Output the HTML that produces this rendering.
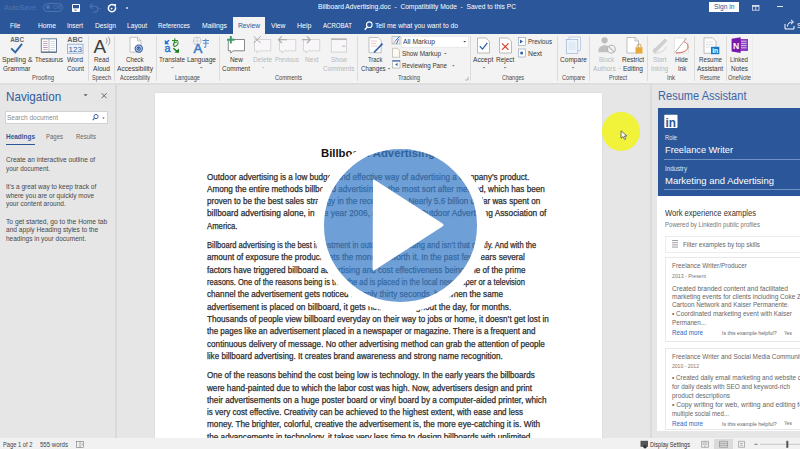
<!DOCTYPE html>
<html><head><meta charset="utf-8">
<style>
*{margin:0;padding:0;box-sizing:border-box}
html,body{width:800px;height:449px;overflow:hidden;background:#e6e6e6;font-family:"Liberation Sans",sans-serif}
body{position:relative}
.a{position:absolute}
.t{position:absolute;white-space:pre;line-height:1;transform-origin:0 50%}
svg{position:absolute;overflow:visible}
</style></head><body>
<!-- title + tabs -->
<div class="a" style="left:0;top:0;width:800px;height:34px;background:#2b579a"></div>
<div class="a" style="left:233px;top:17px;width:32px;height:17px;background:#f3f3f3"></div>
<!-- ribbon -->
<div class="a" style="left:0;top:34px;width:800px;height:49px;background:#f3f3f3"></div>
<div class="a" style="left:0;top:82.5px;width:800px;height:2px;background:#dedede"></div>
<!-- separators -->
<div class="a" style="left:87.5px;top:36px;width:1px;height:45px;background:#dcdcdc"></div>
<div class="a" style="left:114px;top:36px;width:1px;height:45px;background:#dcdcdc"></div>
<div class="a" style="left:156px;top:36px;width:1px;height:45px;background:#dcdcdc"></div>
<div class="a" style="left:219px;top:36px;width:1px;height:45px;background:#dcdcdc"></div>
<div class="a" style="left:357px;top:36px;width:1px;height:45px;background:#dcdcdc"></div>
<div class="a" style="left:470px;top:36px;width:1px;height:45px;background:#dcdcdc"></div>
<div class="a" style="left:557px;top:36px;width:1px;height:45px;background:#dcdcdc"></div>
<div class="a" style="left:589px;top:36px;width:1px;height:45px;background:#dcdcdc"></div>
<div class="a" style="left:647px;top:36px;width:1px;height:45px;background:#dcdcdc"></div>
<div class="a" style="left:694px;top:36px;width:1px;height:45px;background:#dcdcdc"></div>
<div class="a" style="left:726px;top:36px;width:1px;height:45px;background:#dcdcdc"></div>
<div class="a" style="left:752px;top:36px;width:1px;height:45px;background:#ebebeb"></div>
<!-- nav pane -->
<div class="a" style="left:0;top:84.5px;width:117px;height:353.5px;background:#e6e6e6;border-right:2px solid #dadada"></div>
<div class="a" style="left:5px;top:111px;width:102.5px;height:13px;background:#fff;border:1px solid #d2d2d2"></div>
<div class="a" style="left:5.5px;top:143.5px;width:29.5px;height:1.6px;background:#2b579a"></div>
<!-- doc page -->
<div class="a" style="left:154.5px;top:92.5px;width:447.8px;height:346px;background:#fff;box-shadow:0 0 1.5px #cfcfcf"></div>
<!-- resume pane -->
<div class="a" style="left:649.5px;top:84.5px;width:150.5px;height:353.5px;background:#e6e6e6;border-left:2px solid #dadada"></div>
<div class="a" style="left:657.5px;top:108px;width:142.5px;height:87.5px;background:#2b579a"></div>
<div class="a" style="left:664px;top:159px;width:136px;height:1px;background:#6f93c7"></div>
<div class="a" style="left:664px;top:188.8px;width:136px;height:1px;background:#6f93c7"></div>
<div class="a" style="left:656.5px;top:195.5px;width:143.5px;height:235px;background:#fff"></div>
<div class="a" style="left:664.5px;top:235.5px;width:136px;height:17.5px;background:#fff;border:1px solid #ececec;border-right:none"></div>
<div class="a" style="left:664.5px;top:256.5px;width:136px;height:85px;background:#fff;border:1px solid #e8e8e8;border-right:none"></div>
<div class="a" style="left:664.5px;top:347.5px;width:136px;height:82px;background:#fff;border:1px solid #e8e8e8;border-right:none"></div>
<!-- status bar -->
<div class="a" style="left:0;top:438px;width:800px;height:11px;background:#f1f1f1"></div>
<div class="a" style="left:714px;top:438.5px;width:19px;height:10.5px;background:#dadada"></div>
<div class="a" style="left:43px;top:2.5px;width:20px;height:9.5px;border:1px solid #4f74b2;border-radius:5px"></div>
<div class="a" style="left:45.5px;top:5.2px;width:4px;height:4px;background:#4f74b2;border-radius:2px"></div>
<span class="t" style="left:53px;top:3.6px;font-size:6px;color:#4f74b2">Off</span>
<svg style="left:72px;top:3.8px" width="9" height="8" viewBox="0 0 9 8"><path d="M0.5 0.5h7v7h-7z" fill="none" stroke="#fff" stroke-width="1"/><rect x="0.5" y="4.3" width="7" height="3.2" fill="#fff"/><rect x="2.4" y="5.4" width="2.2" height="1.4" fill="#6f8fc3"/></svg>
<svg style="left:88px;top:3px" width="14" height="10" viewBox="0 0 14 10"><path d="M2 3.2h5a2.9 2.9 0 0 1 0 5.8H5" fill="none" stroke="#4f74b2" stroke-width="1.1"/><path d="M4.5 0.7L2 3.2l2.5 2.5" fill="none" stroke="#4f74b2" stroke-width="1.1"/><path d="M11 5l1.2 1.2 1.2-1.2z" fill="#4f74b2"/></svg>
<svg style="left:106.5px;top:3.5px" width="10" height="10" viewBox="0 0 10 10"><path d="M6.8 1.1A3.6 3.6 0 1 0 8.4 3.2" fill="none" stroke="#fff" stroke-width="1.5"/><path d="M5.6 0.1L9.2 0.3L8.6 3.6z" fill="#fff"/><circle cx="4.6" cy="4.6" r="0.9" fill="#fff"/></svg>
<div class="a" style="left:125.8px;top:6.5px;width:2px;height:2px;background:#aebfe0"></div>
<svg style="left:752px;top:4.5px" width="8" height="6" viewBox="0 0 8 6"><rect x="0.4" y="0.4" width="6.6" height="4.8" fill="none" stroke="#dfe6f2" stroke-width="0.8"/><rect x="0.4" y="0.4" width="6.6" height="1.4" fill="#dfe6f2"/><path d="M3.7 2v3" stroke="#dfe6f2" stroke-width="0.8"/></svg>
<div class="a" style="left:777px;top:6px;width:6px;height:1px;background:#dfe6f2"></div>
<div class="a" style="left:709px;top:2px;width:30px;height:10px;background:#fff"></div>
<svg style="left:364px;top:20.5px" width="9" height="10" viewBox="0 0 9 10"><circle cx="5.3" cy="3.7" r="2.8" fill="none" stroke="#fff" stroke-width="1.1"/><path d="M3.4 5.8L0.8 8.8" stroke="#fff" stroke-width="1.3"/></svg>
<svg style="left:784px;top:19px" width="12" height="11" viewBox="0 0 12 11"><path d="M1 5v5h9V7" fill="none" stroke="#fff" stroke-width="1"/><path d="M3.5 7.5c0-3 2-4.5 5-4.5M7 0.8l2.5 2.2L7 5.2" fill="none" stroke="#fff" stroke-width="1"/></svg>

<svg style="left:0;top:0" width="800" height="449" viewBox="0 0 800 449">
<!-- Spelling: ABC + check -->
<text x="10.3" y="42.4" font-family="Liberation Sans" font-size="6.6" font-weight="700" fill="#666" textLength="13.7" lengthAdjust="spacingAndGlyphs">ABC</text>
<path d="M11.2 48.3L15.3 52.4L22 43.8" fill="none" stroke="#2f63ae" stroke-width="1.9"/>
<!-- Thesaurus book -->
<rect x="41.3" y="38.8" width="15.2" height="13.4" fill="#fff" stroke="#6b7f99" stroke-width="1"/>
<path d="M49 39v13" stroke="#9aa7b8" stroke-width="0.8"/>
<path d="M43 41.5h4.5M43 43.5h4.5M43 45.5h4.5M43 47.5h4.5M43 49.5h4.5" stroke="#e08a8a" stroke-width="0.7"/>
<path d="M43 43.5h4.5" stroke="#8aa8e0" stroke-width="0.7"/><path d="M43 47.5h4.5" stroke="#a18ad0" stroke-width="0.7"/>
<path d="M50.5 41.5h4.5M50.5 43.5h4.5M50.5 45.5h4.5M50.5 47.5h4.5M50.5 49.5h4.5" stroke="#c9ced6" stroke-width="0.7"/>
<path d="M41.3 52.2h15.2" stroke="#5b6f88" stroke-width="1.2"/>
<!-- Word count -->
<text x="67.3" y="42.4" font-family="Liberation Sans" font-size="6.6" font-weight="700" fill="#666" textLength="15.5" lengthAdjust="spacingAndGlyphs">ABC</text>
<rect x="67.5" y="44.2" width="15.5" height="9" fill="#eef3fb" stroke="#8ca6cc" stroke-width="0.8"/>
<text x="68.6" y="51.6" font-family="Liberation Sans" font-size="6.8" fill="#2f63ae" textLength="13.3" lengthAdjust="spacingAndGlyphs">123</text>
<!-- Read aloud -->
<text x="93.6" y="52.6" font-family="Liberation Sans" font-size="18" fill="#3c3c3c" textLength="12.6" lengthAdjust="spacingAndGlyphs">A</text>
<path d="M106.2 38.3q2 2.6 0 5.4M108.2 36.8q3.3 4.2 0 8.6" fill="none" stroke="#777" stroke-width="0.7"/>
<!-- Check accessibility -->
<path d="M130 37.3h7.5l3.5 3.5v11.3h-11z" fill="#fdfdfd" stroke="#b5b5b5" stroke-width="0.8"/>
<path d="M137.5 37.3v3.5h3.5" fill="none" stroke="#b5b5b5" stroke-width="0.8"/>
<circle cx="138.8" cy="48.6" r="4.2" fill="#3b5e9e"/>
<circle cx="138.8" cy="48.6" r="2.7" fill="none" stroke="#d6e4f6" stroke-width="0.9"/>
<path d="M137.3 48.3l1.4 1.4 2.4-2.6" fill="none" stroke="#9fc3ee" stroke-width="0.9"/>
<!-- Translate -->
<path d="M169 40.3l-2.6 2.3" stroke="#1e73d2" stroke-width="1.5"/><path d="M164.8 39.8v4.4h4.4z" fill="#1e73d2"/>
<text x="164.5" y="52.4" font-family="Liberation Sans" font-size="11.5" fill="#1e73d2" textLength="6" lengthAdjust="spacingAndGlyphs" stroke="#1e73d2" stroke-width="0.4">a</text>
<path d="M172 40.5h6M175 38.3l-1.5 7.5M178.7 42.3c-3.5-1-6 1.6-5.2 3.3 0.8 1.5 3.8 0.5 4.8-2.5" fill="none" stroke="#2a8a2a" stroke-width="1.1"/>
<path d="M173.3 48.3l3.5 3" stroke="#1a7a1a" stroke-width="1.5"/><path d="M179 52.8h-4.6l4.6-4.3z" fill="#1a7a1a"/>
<!-- Language -->
<circle cx="197.2" cy="41" r="3.9" fill="none" stroke="#b0b0b0" stroke-width="0.6"/>
<path d="M193.3 41h7.8M197.2 37.1v7.8" stroke="#b8b8b8" stroke-width="0.5"/>
<text x="193.5" y="53.2" font-family="Liberation Sans" font-size="12" fill="#3b7bc9" stroke="#3b7bc9" stroke-width="0.5" textLength="8.8" lengthAdjust="spacingAndGlyphs">A</text>
<path d="M202.5 40.5h6.5M203.2 43.2h5.5M205.8 38.8v8.3M204 47.3h1.8" fill="none" stroke="#4f8cd6" stroke-width="1"/>
<!-- New comment -->
<path d="M228.3 39.5h16.2v11.3h-11.5l-2.3 2.3v-2.3h-2.4z" fill="#fff" stroke="#7a7a7a" stroke-width="0.9"/>
<path d="M230.8 36v7.4M227.1 39.7h7.4" stroke="#3a9a6a" stroke-width="1.9"/>
<!-- Delete disabled -->
<path d="M254.5 39.5h16.2v11.3h-11.5l-2.3 2.3v-2.3h-2.4z" fill="#f8f6f8" stroke="#d0cdd0" stroke-width="0.8"/>
<path d="M253.8 36.3l6.8 6.8M260.6 36.3l-6.8 6.8" stroke="#a8a8a8" stroke-width="1"/>
<!-- Previous disabled -->
<path d="M279.5 39.5h16.2v11.3h-11.5l-2.3 2.3v-2.3h-2.4z" fill="#f8f6f8" stroke="#d0cdd0" stroke-width="0.8"/>
<path d="M278.5 39.7h8.5M281.8 36.4l-3.3 3.3 3.3 3.3" fill="none" stroke="#a8a8a8" stroke-width="1.1"/>
<!-- Next disabled -->
<path d="M303.5 39.5h16.2v11.3h-11.5l-2.3 2.3v-2.3h-2.4z" fill="#f8f6f8" stroke="#d0cdd0" stroke-width="0.8"/>
<path d="M301.8 39.7h8.5M307 36.4l3.3 3.3-3.3 3.3" fill="none" stroke="#a8a8a8" stroke-width="1.1"/>
<!-- Show comments disabled -->
<rect x="331.3" y="38.6" width="15.3" height="13.5" fill="#f8f6f8" stroke="#cfcccf" stroke-width="0.8"/>
<path d="M331.3 39.3h15.3" stroke="#b9b5b9" stroke-width="1.5"/>
<path d="M342 46.2h3.5" stroke="#c5c0c5" stroke-width="1.2"/>
<!-- Track changes -->
<path d="M369 37.5h9l3.2 3.2v12h-12.2z" fill="#fff" stroke="#a8a8a8" stroke-width="0.7"/>
<path d="M371 41h6M371 43.5h5M371 46h6" stroke="#e8b6b6" stroke-width="0.7"/>
<path d="M374 52.5l8.5-8.8" stroke="#2f5fae" stroke-width="1.7"/>
<!-- All markup / show markup / reviewing pane icons -->
<rect x="392" y="36.5" width="8" height="7.5" fill="#f0f0f5" stroke="#9aa" stroke-width="0.6"/>
<path d="M395.5 40.5l4-4M396.5 44l2-5" stroke="#4b7bc0" stroke-width="1"/><path d="M393 43.5l3-3" stroke="#d78080" stroke-width="0.9"/>
<path d="M392.5 48.3h5l2 2v7h-7z" fill="#fdf8f0" stroke="#a8a8a8" stroke-width="0.6"/>
<rect x="392.5" y="60.5" width="7.5" height="7.5" fill="#fff" stroke="#9a9a9a" stroke-width="0.6"/>
<path d="M392.5 61h7.5" stroke="#2f5fae" stroke-width="1.2"/><path d="M397.5 62.8v3.5l-2.3-1.75z" fill="#2f5fae"/>
<rect x="401.5" y="36.2" width="67" height="11" fill="#fff" stroke="#e0e0e0" stroke-width="0.6"/>
<path d="M463.3 41l1.4 1.4 1.4-1.4z" fill="#444"/>
<path d="M444.2 53l1.2 1.2 1.2-1.2z" fill="#555"/>
<path d="M452.2 65.2l1.2 1.2 1.2-1.2z" fill="#555"/>
<path d="M387.8 68.2l1.2 1.2 1.2-1.2z" fill="#555"/>
<path d="M465 80h3M468 77v3" stroke="#888" stroke-width="0.6"/>
<!-- Accept -->
<path d="M477.5 38h8.5l3.5 3.5v11.5h-12z" fill="#fff" stroke="#a0a0a0" stroke-width="0.7"/>
<path d="M479.8 46.3l2.7 2.8 4.8-6.3" fill="none" stroke="#2f63ae" stroke-width="1.3"/>
<!-- Reject -->
<path d="M499.5 38h8.5l3.5 3.5v11.5h-12z" fill="#fff" stroke="#a0a0a0" stroke-width="0.7"/>
<path d="M502 43.3l6.5 6.5M508.5 43.3l-6.5 6.5" stroke="#d83b2b" stroke-width="1.2"/>
<!-- prev/next small -->
<rect x="518.3" y="37.5" width="7" height="8" fill="#fff" stroke="#8a9ab0" stroke-width="0.6"/>
<path d="M520 39.5l3 2-3 2z" fill="#2f5fae"/>
<rect x="518.3" y="49" width="7" height="8" fill="#fff" stroke="#8a9ab0" stroke-width="0.6"/>
<circle cx="521.6" cy="53" r="1.5" fill="#2f5fae"/>
<!-- Compare -->
<rect x="569" y="37" width="11.5" height="13.5" fill="#f4f8fc" stroke="#a9bfd8" stroke-width="0.7"/>
<rect x="566.3" y="39.5" width="11.5" height="13.8" fill="#eef4fb" stroke="#9ab3d3" stroke-width="0.7"/>
<path d="M568.5 43h7M568.5 45h7M568.5 47h7M568.5 49h7" stroke="#c2d3e8" stroke-width="0.6"/>
<!-- Block authors disabled -->
<circle cx="604.6" cy="40.3" r="3.1" fill="#bdbdbd"/>
<path d="M598.3 52.3c0-5 2.5-7 6.3-7s6.3 2 6.3 7z" fill="#c0c0c0"/>
<circle cx="611.4" cy="49.2" r="3.9" fill="#f3f3f3" stroke="#b5b5b5" stroke-width="1.1"/>
<path d="M608.8 46.6l5.2 5.2" stroke="#b5b5b5" stroke-width="1.1"/>
<!-- Restrict editing -->
<path d="M627 37.5h8l3.5 3.5v12h-11.5z" fill="#fff" stroke="#a8a8a8" stroke-width="0.7"/>
<path d="M635 37.5v3.5h3.5" fill="none" stroke="#a8a8a8" stroke-width="0.7"/>
<path d="M637 47.5v-1.5a2 2 0 0 1 4 0v1.5" fill="none" stroke="#d9a441" stroke-width="0.9"/>
<rect x="635.5" y="47.3" width="7" height="6.2" fill="#e8a93a"/>
<!-- Start inking disabled -->
<path d="M653 50.5l12-11.5l1.8 1.8l-11.5 11.8z" fill="#d0d0d0" stroke="#bdbdbd" stroke-width="0.5"/>
<path d="M655 48c-3 3-2 6 2.5 5s8-3 8.5-6" fill="none" stroke="#c8c8c8" stroke-width="0.8"/>
<!-- Hide ink -->
<path d="M674.3 38h9l5 5v10h-14z" fill="#fff" stroke="#c8c8c8" stroke-width="0.5"/>
<path d="M675 52.5l11.5-14.5" stroke="#888" stroke-width="0.7"/>
<path d="M676 53c6 0 12-2 12-6s-3-5-4-5" fill="none" stroke="#d44a3a" stroke-width="0.9"/>
<!-- Resume assistant -->
<path d="M704 37.8h8.5l3.5 3.5v12h-12z" fill="#fcfcfc" stroke="#a8a8a8" stroke-width="0.7"/>
<path d="M706 42h7M706 44.5h7M706 47h4" stroke="#d0d0d0" stroke-width="0.6"/>
<rect x="711" y="46.8" width="8.3" height="7.4" fill="#1a77c2"/>
<text x="712.2" y="53.2" font-family="Liberation Sans" font-size="6.3" font-weight="700" fill="#fff" textLength="6" lengthAdjust="spacingAndGlyphs">in</text>
<!-- OneNote -->
<path d="M739 39h9v12h-9z" fill="#8a3fc0"/>
<path d="M741 41.2h5.5M741 43.4h5.5M741 45.6h5.5M741 47.8h5.5" stroke="#e3cdf3" stroke-width="0.9"/>
<path d="M731.6 38.8l9-1.5v15.8l-9-1.5z" fill="#7719aa"/>
<text x="733" y="49" font-family="Liberation Sans" font-size="9.5" font-weight="700" fill="#fff" textLength="6.2" lengthAdjust="spacingAndGlyphs">N</text>
<!-- ribbon small dropdown dashes -->
<path d="M171.3 67.6h2.2M200.3 67.6h2.2M483 67.6h2.2M504 67.6h2.2M572 67.6h2.2" stroke="#666" stroke-width="0.8"/>
<path d="M262 67.6h2.2" stroke="#bbb" stroke-width="0.8"/>
<path d="M618.5 68.3h2" stroke="#bbb" stroke-width="0.8"/>
<!-- nav pane icons -->
<path d="M83.6 94.2h4l-2 2.1z" fill="#555"/>
<path d="M101.6 93.2l5 5M106.6 93.2l-5 5" stroke="#555" stroke-width="0.9"/>
<circle cx="96" cy="116.6" r="2.1" fill="none" stroke="#3d66a8" stroke-width="1"/>
<path d="M94.6 118.2l-1.9 2" stroke="#3d66a8" stroke-width="1.2"/>
<path d="M102.2 117.6h2.4l-1.2 1.3z" fill="#555"/>
<!-- linkedin logo in pane -->
<rect x="664.3" y="114.8" width="13.2" height="13.2" rx="0.8" fill="#fff"/>
<text x="665.6" y="126.6" font-family="Liberation Sans" font-size="12" font-weight="700" fill="#2b579a" textLength="10.4" lengthAdjust="spacingAndGlyphs">in</text>
<!-- filter icon -->
<path d="M672 240.5h6M672 242.7h6M672 244.9h6M672 247.1h6" stroke="#888" stroke-width="0.8"/>
<!-- status bar icons -->
<g transform="translate(0,0.8)">
<rect x="76.5" y="440.5" width="7" height="6" fill="none" stroke="#777" stroke-width="0.6"/>
<path d="M80 440.5v6M81.5 442.5l1 1-1 1" stroke="#777" stroke-width="0.6" fill="none"/>
<rect x="640.5" y="440" width="7.5" height="6" fill="#555"/>
<circle cx="645" cy="446" r="1.8" fill="#333"/>
<path d="M701.5 440.5h7v6h-7zM705 440.5v6M702.5 442h1.5M702.5 443.5h1.5M706 442h1.5M706 443.5h1.5" fill="none" stroke="#888" stroke-width="0.6"/>
<path d="M719.5 440.5h8v6h-8zM719.5 442.5h8M719.5 444.5h8" fill="none" stroke="#888" stroke-width="0.6"/>
<path d="M738.5 440.5h6v6h-6zM740 442.5h3M740 444.5h3" fill="none" stroke="#888" stroke-width="0.6"/>
<path d="M754.5 443.5h3" stroke="#666" stroke-width="0.9"/>
<path d="M760 443.5h40" stroke="#aaa" stroke-width="0.6"/>
<rect x="786.3" y="440" width="2" height="7" fill="#555"/>
</g>
</svg>

<span class="t" id="t0" style="left:4.00px;top:3.76px;font-size:7.4px;color:#4f74b2;transform:scaleX(0.9981);">AutoSave</span>
<span class="t" id="t1" style="left:318.00px;top:3.34px;font-size:7.6px;color:#ffffff;transform:scaleX(0.8752);">Billboard Advertising.doc&nbsp; -&nbsp; Compatibility Mode&nbsp; -&nbsp; Saved to this PC</span>
<span class="t" id="t2" style="left:713.50px;top:3.46px;font-size:7.4px;color:#2b579a;transform:scaleX(0.9067);">Sign in</span>
<span class="t" id="t3" style="left:9.80px;top:21.62px;font-size:7.8px;color:#ffffff;transform:scaleX(0.8189);">File</span>
<span class="t" id="t4" style="left:37.90px;top:21.62px;font-size:7.8px;color:#ffffff;transform:scaleX(0.8649);">Home</span>
<span class="t" id="t5" style="left:67.00px;top:21.62px;font-size:7.8px;color:#ffffff;transform:scaleX(0.8205);">Insert</span>
<span class="t" id="t6" style="left:95.00px;top:21.62px;font-size:7.8px;color:#ffffff;transform:scaleX(0.8649);">Design</span>
<span class="t" id="t7" style="left:127.00px;top:21.62px;font-size:7.8px;color:#ffffff;transform:scaleX(0.8539);">Layout</span>
<span class="t" id="t8" style="left:158.00px;top:21.62px;font-size:7.8px;color:#ffffff;transform:scaleX(0.8025);">References</span>
<span class="t" id="t9" style="left:202.00px;top:21.62px;font-size:7.8px;color:#ffffff;transform:scaleX(0.8738);">Mailings</span>
<span class="t" id="t10" style="left:271.00px;top:21.62px;font-size:7.8px;color:#ffffff;transform:scaleX(0.8649);">View</span>
<span class="t" id="t11" style="left:296.70px;top:21.62px;font-size:7.8px;color:#ffffff;transform:scaleX(0.9036);">Help</span>
<span class="t" id="t12" style="left:323.00px;top:21.62px;font-size:7.8px;color:#ffffff;transform:scaleX(0.7785);">ACROBAT</span>
<span class="t" id="t13" style="left:375.00px;top:21.62px;font-size:7.8px;color:#ffffff;transform:scaleX(0.8626);">Tell me what you want to do</span>
<span class="t" id="t14" style="left:238.00px;top:21.62px;font-size:7.8px;color:#2b579a;transform:scaleX(0.8601);">Review</span>
<span class="t" id="t15" style="left:797.00px;top:21.62px;font-size:7.8px;color:#ffffff;">S</span>
<span class="t" id="t16" style="left:1.50px;top:56.31px;font-size:7.3px;color:#383838;transform:scaleX(0.9282);">Spelling &amp;</span>
<span class="t" id="t17" style="left:3.00px;top:64.81px;font-size:7.3px;color:#383838;transform:scaleX(0.8925);">Grammar</span>
<span class="t" id="t18" style="left:35.00px;top:56.31px;font-size:7.3px;color:#383838;transform:scaleX(0.8120);">Thesaurus</span>
<span class="t" id="t19" style="left:67.00px;top:56.31px;font-size:7.3px;color:#383838;transform:scaleX(0.9242);">Word</span>
<span class="t" id="t20" style="left:67.00px;top:64.81px;font-size:7.3px;color:#383838;transform:scaleX(0.8725);">Count</span>
<span class="t" id="t21" style="left:94.00px;top:56.31px;font-size:7.3px;color:#383838;transform:scaleX(0.8594);">Read</span>
<span class="t" id="t22" style="left:93.00px;top:64.81px;font-size:7.3px;color:#383838;transform:scaleX(0.9105);">Aloud</span>
<span class="t" id="t23" style="left:126.40px;top:56.31px;font-size:7.3px;color:#383838;transform:scaleX(0.8459);">Check</span>
<span class="t" id="t24" style="left:117.00px;top:64.81px;font-size:7.3px;color:#383838;transform:scaleX(0.9057);">Accessibility</span>
<span class="t" id="t25" style="left:159.00px;top:56.31px;font-size:7.3px;color:#383838;transform:scaleX(0.8622);">Translate</span>
<span class="t" id="t26" style="left:187.00px;top:56.31px;font-size:7.3px;color:#383838;transform:scaleX(0.8932);">Language</span>
<span class="t" id="t27" style="left:230.40px;top:56.31px;font-size:7.3px;color:#383838;transform:scaleX(0.8761);">New</span>
<span class="t" id="t28" style="left:222.00px;top:64.81px;font-size:7.3px;color:#383838;transform:scaleX(0.8849);">Comment</span>
<span class="t" id="t29" style="left:253.20px;top:56.31px;font-size:7.3px;color:#b8b8b8;transform:scaleX(0.9102);">Delete</span>
<span class="t" id="t30" style="left:275.00px;top:56.31px;font-size:7.3px;color:#b8b8b8;transform:scaleX(0.8348);">Previous</span>
<span class="t" id="t31" style="left:304.50px;top:56.31px;font-size:7.3px;color:#b8b8b8;transform:scaleX(0.8991);">Next</span>
<span class="t" id="t32" style="left:331.00px;top:56.31px;font-size:7.3px;color:#b8b8b8;transform:scaleX(0.8650);">Show</span>
<span class="t" id="t33" style="left:323.20px;top:64.81px;font-size:7.3px;color:#b8b8b8;transform:scaleX(0.8928);">Comments</span>
<span class="t" id="t34" style="left:367.90px;top:56.31px;font-size:7.3px;color:#383838;transform:scaleX(0.8007);">Track</span>
<span class="t" id="t35" style="left:360.50px;top:64.81px;font-size:7.3px;color:#383838;transform:scaleX(0.8453);">Changes</span>
<span class="t" id="t36" style="left:403.00px;top:37.81px;font-size:7.3px;color:#383838;transform:scaleX(0.9284);">All Markup</span>
<span class="t" id="t37" style="left:402.00px;top:49.81px;font-size:7.3px;color:#383838;transform:scaleX(0.8739);">Show Markup</span>
<span class="t" id="t38" style="left:402.10px;top:61.81px;font-size:7.3px;color:#383838;transform:scaleX(0.8514);">Reviewing Pane</span>
<span class="t" id="t39" style="left:472.90px;top:56.31px;font-size:7.3px;color:#383838;transform:scaleX(0.9098);">Accept</span>
<span class="t" id="t40" style="left:496.00px;top:56.31px;font-size:7.3px;color:#383838;transform:scaleX(0.8846);">Reject</span>
<span class="t" id="t41" style="left:528.00px;top:37.81px;font-size:7.3px;color:#383838;transform:scaleX(0.8453);">Previous</span>
<span class="t" id="t42" style="left:528.00px;top:49.51px;font-size:7.3px;color:#383838;transform:scaleX(0.9324);">Next</span>
<span class="t" id="t43" style="left:560.00px;top:56.31px;font-size:7.3px;color:#383838;transform:scaleX(0.8995);">Compare</span>
<span class="t" id="t44" style="left:599.00px;top:56.31px;font-size:7.3px;color:#b8b8b8;transform:scaleX(0.8406);">Block</span>
<span class="t" id="t45" style="left:593.00px;top:64.81px;font-size:7.3px;color:#b8b8b8;transform:scaleX(0.9063);">Authors</span>
<span class="t" id="t46" style="left:622.00px;top:56.31px;font-size:7.3px;color:#383838;transform:scaleX(0.8895);">Restrict</span>
<span class="t" id="t47" style="left:623.00px;top:64.81px;font-size:7.3px;color:#383838;transform:scaleX(0.8964);">Editing</span>
<span class="t" id="t48" style="left:652.90px;top:56.31px;font-size:7.3px;color:#b8b8b8;transform:scaleX(0.8689);">Start</span>
<span class="t" id="t49" style="left:651.20px;top:64.81px;font-size:7.3px;color:#b8b8b8;transform:scaleX(0.8828);">Inking</span>
<span class="t" id="t50" style="left:675.00px;top:56.31px;font-size:7.3px;color:#383838;transform:scaleX(0.8658);">Hide</span>
<span class="t" id="t51" style="left:677.60px;top:64.81px;font-size:7.3px;color:#383838;transform:scaleX(0.8526);">Ink</span>
<span class="t" id="t52" style="left:699.00px;top:56.31px;font-size:7.3px;color:#383838;transform:scaleX(0.8465);">Resume</span>
<span class="t" id="t53" style="left:697.00px;top:64.81px;font-size:7.3px;color:#383838;transform:scaleX(0.8781);">Assistant</span>
<span class="t" id="t54" style="left:730.00px;top:56.31px;font-size:7.3px;color:#383838;transform:scaleX(0.8366);">Linked</span>
<span class="t" id="t55" style="left:731.00px;top:64.81px;font-size:7.3px;color:#383838;transform:scaleX(0.8918);">Notes</span>
<span class="t" id="t56" style="left:32.00px;top:75.23px;font-size:6.6px;color:#4a4a4a;transform:scaleX(0.8957);">Proofing</span>
<span class="t" id="t57" style="left:92.00px;top:75.23px;font-size:6.6px;color:#4a4a4a;transform:scaleX(0.8492);">Speech</span>
<span class="t" id="t58" style="left:120.00px;top:75.23px;font-size:6.6px;color:#4a4a4a;transform:scaleX(0.8351);">Accessibility</span>
<span class="t" id="t59" style="left:175.00px;top:75.23px;font-size:6.6px;color:#4a4a4a;transform:scaleX(0.8520);">Language</span>
<span class="t" id="t60" style="left:275.00px;top:75.23px;font-size:6.6px;color:#4a4a4a;transform:scaleX(0.8466);">Comments</span>
<span class="t" id="t61" style="left:398.00px;top:75.23px;font-size:6.6px;color:#4a4a4a;transform:scaleX(0.8784);">Tracking</span>
<span class="t" id="t62" style="left:502.00px;top:75.23px;font-size:6.6px;color:#4a4a4a;transform:scaleX(0.8331);">Changes</span>
<span class="t" id="t63" style="left:562.00px;top:75.23px;font-size:6.6px;color:#4a4a4a;transform:scaleX(0.8479);">Compare</span>
<span class="t" id="t64" style="left:609.00px;top:75.23px;font-size:6.6px;color:#4a4a4a;transform:scaleX(0.8616);">Protect</span>
<span class="t" id="t65" style="left:667.00px;top:75.23px;font-size:6.6px;color:#4a4a4a;transform:scaleX(0.9094);">Ink</span>
<span class="t" id="t66" style="left:700.00px;top:75.23px;font-size:6.6px;color:#4a4a4a;transform:scaleX(0.8142);">Resume</span>
<span class="t" id="t67" style="left:728.00px;top:75.23px;font-size:6.6px;color:#4a4a4a;transform:scaleX(0.8710);">OneNote</span>
<span class="t" id="t68" style="left:6.20px;top:90.82px;font-size:12.4px;color:#2e5d9f;transform:scaleX(0.9426);">Navigation</span>
<span class="t" id="t69" style="left:6.50px;top:113.99px;font-size:7.0px;color:#8a8a8a;transform:scaleX(0.9294);">Search document</span>
<span class="t" id="t70" style="left:6.00px;top:132.87px;font-size:7.2px;color:#2b579a;font-weight:700;transform:scaleX(0.8962);">Headings</span>
<span class="t" id="t71" style="left:46.00px;top:132.87px;font-size:7.2px;color:#666;transform:scaleX(0.8337);">Pages</span>
<span class="t" id="t72" style="left:76.00px;top:132.87px;font-size:7.2px;color:#666;transform:scaleX(0.8344);">Results</span>
<span class="t" id="t73" style="left:6.00px;top:156.09px;font-size:7.0px;color:#484848;transform:scaleX(0.9394);">Create an interactive outline of</span>
<span class="t" id="t74" style="left:6.00px;top:165.09px;font-size:7.0px;color:#484848;transform:scaleX(0.9119);">your document.</span>
<span class="t" id="t75" style="left:6.00px;top:183.19px;font-size:7.0px;color:#484848;transform:scaleX(0.9331);">It&#x27;s a great way to keep track of</span>
<span class="t" id="t76" style="left:6.00px;top:191.79px;font-size:7.0px;color:#484848;transform:scaleX(0.9290);">where you are or quickly move</span>
<span class="t" id="t77" style="left:6.00px;top:200.39px;font-size:7.0px;color:#484848;transform:scaleX(0.9296);">your content around.</span>
<span class="t" id="t78" style="left:6.00px;top:217.59px;font-size:7.0px;color:#484848;transform:scaleX(0.9561);">To get started, go to the Home tab</span>
<span class="t" id="t79" style="left:6.00px;top:226.39px;font-size:7.0px;color:#484848;transform:scaleX(0.9438);">and apply Heading styles to the</span>
<span class="t" id="t80" style="left:6.00px;top:235.09px;font-size:7.0px;color:#484848;transform:scaleX(0.9302);">headings in your document.</span>
<span class="t" id="t81" style="left:321.00px;top:148.03px;font-size:11.2px;color:#111;font-weight:700;transform:scaleX(1.0114);">Billboard Advertising</span>
<span class="t" id="t82" style="left:207.00px;top:172.57px;font-size:9.0px;color:#262626;transform:scaleX(0.9031);-webkit-text-stroke:0.25px #333;">Outdoor advertising is a low budget and effective way of advertising a company’s product.</span>
<span class="t" id="t83" style="left:207.00px;top:184.87px;font-size:9.0px;color:#262626;transform:scaleX(0.9078);-webkit-text-stroke:0.25px #333;">Among the entire methods billboard advertising is the most sort after method, which has been</span>
<span class="t" id="t84" style="left:207.00px;top:197.17px;font-size:9.0px;color:#262626;transform:scaleX(0.8988);-webkit-text-stroke:0.25px #333;">proven to be the best sales strategy in the recent years. Nearly 5.6 billion dollar was spent on</span>
<span class="t" id="t85" style="left:207.00px;top:209.47px;font-size:9.0px;color:#262626;transform:scaleX(0.9229);-webkit-text-stroke:0.25px #333;">billboard advertising alone, in the year 2006, according to Outdoor Advertising Association of</span>
<span class="t" id="t86" style="left:207.00px;top:221.77px;font-size:9.0px;color:#262626;transform:scaleX(0.8588);-webkit-text-stroke:0.25px #333;">America.</span>
<span class="t" id="t87" style="left:207.00px;top:241.17px;font-size:9.0px;color:#262626;transform:scaleX(0.8410);-webkit-text-stroke:0.25px #333;">Billboard advertising is the best investment in outdoor advertising and isn’t that costly. And with the</span>
<span class="t" id="t88" style="left:207.00px;top:253.47px;font-size:9.0px;color:#262626;transform:scaleX(0.9052);-webkit-text-stroke:0.25px #333;">amount of exposure the product gets the money is worth it. In the past few years several</span>
<span class="t" id="t89" style="left:207.00px;top:265.77px;font-size:9.0px;color:#262626;transform:scaleX(0.9019);-webkit-text-stroke:0.25px #333;">factors have triggered billboard advertising and cost effectiveness being one of the prime</span>
<span class="t" id="t90" style="left:207.00px;top:278.07px;font-size:9.0px;color:#262626;transform:scaleX(0.8361);-webkit-text-stroke:0.25px #333;">reasons. One of the reasons being is that the ad is placed in the local newspaper or a television</span>
<span class="t" id="t91" style="left:207.00px;top:290.37px;font-size:9.0px;color:#262626;transform:scaleX(0.9033);-webkit-text-stroke:0.25px #333;">channel the advertisement gets noticed for only thirty seconds, but when the same</span>
<span class="t" id="t92" style="left:207.00px;top:302.67px;font-size:9.0px;color:#262626;transform:scaleX(0.9192);-webkit-text-stroke:0.25px #333;">advertisement is placed on billboard, it gets noticed throughout the day, for months.</span>
<span class="t" id="t93" style="left:207.00px;top:314.97px;font-size:9.0px;color:#262626;transform:scaleX(0.9049);-webkit-text-stroke:0.25px #333;">Thousands of people view billboard everyday on their way to jobs or home, it doesn’t get lost in</span>
<span class="t" id="t94" style="left:207.00px;top:327.27px;font-size:9.0px;color:#262626;transform:scaleX(0.8889);-webkit-text-stroke:0.25px #333;">the pages like an advertisement placed in a newspaper or magazine. There is a frequent and</span>
<span class="t" id="t95" style="left:207.00px;top:339.57px;font-size:9.0px;color:#262626;transform:scaleX(0.9053);-webkit-text-stroke:0.25px #333;">continuous delivery of message. No other advertising method can grab the attention of people</span>
<span class="t" id="t96" style="left:207.00px;top:351.87px;font-size:9.0px;color:#262626;transform:scaleX(0.8999);-webkit-text-stroke:0.25px #333;">like billboard advertising. It creates brand awareness and strong name recognition.</span>
<span class="t" id="t97" style="left:207.00px;top:371.27px;font-size:9.0px;color:#262626;transform:scaleX(0.8979);-webkit-text-stroke:0.25px #333;">One of the reasons behind the cost being low is technology. In the early years the billboards</span>
<span class="t" id="t98" style="left:207.00px;top:383.57px;font-size:9.0px;color:#262626;transform:scaleX(0.9025);-webkit-text-stroke:0.25px #333;">were hand-painted due to which the labor cost was high. Now, advertisers design and print</span>
<span class="t" id="t99" style="left:207.00px;top:395.87px;font-size:9.0px;color:#262626;transform:scaleX(0.9097);-webkit-text-stroke:0.25px #333;">their advertisements on a huge poster board or vinyl board by a computer-aided printer, which</span>
<span class="t" id="t100" style="left:207.00px;top:408.17px;font-size:9.0px;color:#262626;transform:scaleX(0.8929);-webkit-text-stroke:0.25px #333;">is very cost effective. Creativity can be achieved to the highest extent, with ease and less</span>
<span class="t" id="t101" style="left:207.00px;top:420.47px;font-size:9.0px;color:#262626;transform:scaleX(0.9105);-webkit-text-stroke:0.25px #333;">money. The brighter, colorful, creative the advertisement is, the more eye-catching it is. With</span>
<span class="t" id="t102" style="left:207.00px;top:432.77px;font-size:9.0px;color:#262626;transform:scaleX(0.9071);-webkit-text-stroke:0.25px #333;">the advancements in technology, it takes very less time to design billboards with unlimited</span>
<span class="t" id="t103" style="left:657.50px;top:90.06px;font-size:12.0px;color:#3b65a6;transform:scaleX(0.9214);">Resume Assistant</span>
<span class="t" id="t104" style="left:665.00px;top:135.01px;font-size:6.8px;color:#dfe7f3;transform:scaleX(0.8581);">Role</span>
<span class="t" id="t105" style="left:665.00px;top:145.05px;font-size:9.8px;color:#ffffff;transform:scaleX(0.9414);">Freelance Writer</span>
<span class="t" id="t106" style="left:665.00px;top:166.01px;font-size:6.8px;color:#dfe7f3;transform:scaleX(0.9096);">Industry</span>
<span class="t" id="t107" style="left:665.00px;top:175.75px;font-size:9.8px;color:#ffffff;transform:scaleX(0.9669);">Marketing and Advertising</span>
<span class="t" id="t108" style="left:665.00px;top:209.05px;font-size:8.6px;color:#333;transform:scaleX(0.8792);">Work experience examples</span>
<span class="t" id="t109" style="left:665.00px;top:220.69px;font-size:7.0px;color:#777;transform:scaleX(0.8627);">Powered by LinkedIn public profiles</span>
<span class="t" id="t110" style="left:683.00px;top:240.69px;font-size:7.0px;color:#666;transform:scaleX(0.8996);">Filter examples by top skills</span>
<span class="t" id="t111" style="left:672.00px;top:262.37px;font-size:7.2px;color:#666;transform:scaleX(0.8912);">Freelance Writer/Producer</span>
<span class="t" id="t112" style="left:672.00px;top:274.00px;font-size:5.8px;color:#777;transform:scaleX(0.8940);">2013 - Present</span>
<span class="t" id="t113" style="left:672.00px;top:284.99px;font-size:7.0px;color:#666666;transform:scaleX(0.9462);">Created branded content and facilitated</span>
<span class="t" id="t114" style="left:672.00px;top:293.29px;font-size:7.0px;color:#666666;transform:scaleX(0.9261);">marketing events for clients including Coke Z</span>
<span class="t" id="t115" style="left:672.00px;top:301.49px;font-size:7.0px;color:#666666;transform:scaleX(0.9002);">Cartoon Network and Kaiser Permanente.</span>
<span class="t" id="t116" style="left:672.00px;top:310.39px;font-size:7.0px;color:#666666;transform:scaleX(0.9198);">• Coordinated marketing event with Kaiser</span>
<span class="t" id="t117" style="left:672.00px;top:319.19px;font-size:7.0px;color:#666666;transform:scaleX(0.8914);">Permanen...</span>
<span class="t" id="t118" style="left:672.00px;top:328.87px;font-size:7.2px;color:#2b6bbf;transform:scaleX(0.8717);">Read more</span>
<span class="t" id="t119" style="left:722.40px;top:331.11px;font-size:5.6px;color:#666;transform:scaleX(0.9338);">Is this example helpful?</span>
<span class="t" id="t120" style="left:784.00px;top:330.50px;font-size:5.8px;color:#666;transform:scaleX(0.8449);">Yes</span>
<span class="t" id="t121" style="left:672.00px;top:352.87px;font-size:7.2px;color:#666;transform:scaleX(0.8904);">Freelance Writer and Social Media Communit</span>
<span class="t" id="t122" style="left:672.00px;top:364.40px;font-size:5.8px;color:#777;transform:scaleX(0.8723);">2010 - 2012</span>
<span class="t" id="t123" style="left:672.00px;top:374.49px;font-size:7.0px;color:#666666;transform:scaleX(0.9101);">• Created daily email marketing and website c</span>
<span class="t" id="t124" style="left:672.00px;top:383.29px;font-size:7.0px;color:#666666;transform:scaleX(0.9108);">for daily deals with SEO and keyword-rich</span>
<span class="t" id="t125" style="left:672.00px;top:391.99px;font-size:7.0px;color:#666666;transform:scaleX(0.9257);">product descriptions</span>
<span class="t" id="t126" style="left:672.00px;top:400.89px;font-size:7.0px;color:#666666;transform:scaleX(0.9639);">• Copy writing for web, writing and editing fo</span>
<span class="t" id="t127" style="left:672.00px;top:409.59px;font-size:7.0px;color:#666666;transform:scaleX(0.8721);">multiple social med...</span>
<span class="t" id="t128" style="left:672.00px;top:419.87px;font-size:7.2px;color:#2b6bbf;transform:scaleX(0.8717);">Read more</span>
<span class="t" id="t129" style="left:722.40px;top:421.61px;font-size:5.6px;color:#666;transform:scaleX(0.9338);">Is this example helpful?</span>
<span class="t" id="t130" style="left:784.00px;top:421.20px;font-size:5.8px;color:#666;transform:scaleX(0.8449);">Yes</span>
<span class="t" id="t131" style="left:2.50px;top:441.64px;font-size:6.4px;color:#444;transform:scaleX(0.9021);">Page 1 of 2</span>
<span class="t" id="t132" style="left:40.00px;top:441.64px;font-size:6.4px;color:#444;transform:scaleX(0.9492);">555 words</span>
<span class="t" id="t133" style="left:650.00px;top:441.93px;font-size:6.6px;color:#333;transform:scaleX(0.8460);">Display Settings</span>
<div class="a" style="left:150px;top:438px;width:460px;height:11px;background:#f1f1f1"></div>
<div class="a" style="left:602.4px;top:112.4px;width:37.8px;height:38.5px;border-radius:50%;background:#f1f23a"></div>
<svg style="left:620px;top:130px" width="8" height="10" viewBox="0 0 8 10"><path d="M1 0.8v7.5l2-1.8 1.6 3 1.2-0.6-1.5-2.9h2.7z" fill="#fff" stroke="#555" stroke-width="0.8"/></svg>
<div class="a" style="left:313.5px;top:138.5px;width:173px;height:173px;border-radius:50%;border:10.5px solid #fff;background:rgba(60,125,200,0.74)"></div>
<svg style="left:0;top:0" width="800" height="449" viewBox="0 0 800 449"><path d="M373 181Q372.6 178.8 374.8 180L442.5 223.5Q444.5 225 442.5 226.5L374.8 270Q372.6 271.6 372.6 269z" fill="#fff"/></svg>

</body></html>
